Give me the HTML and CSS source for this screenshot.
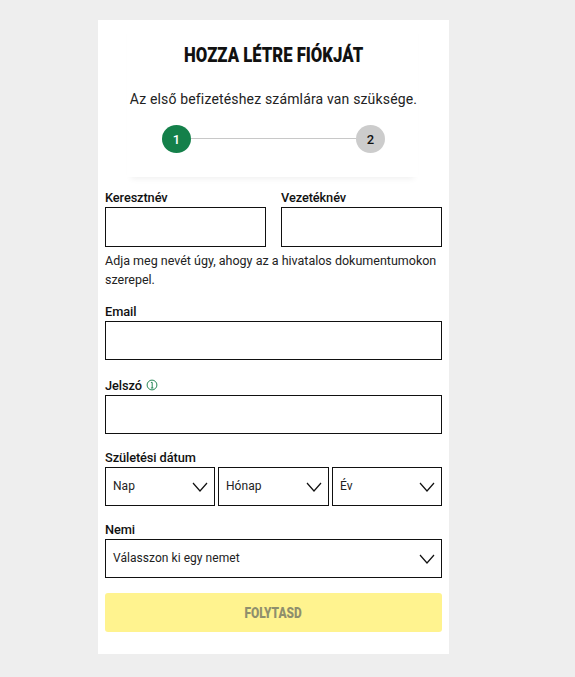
FILE: index.html
```html
<!DOCTYPE html>
<html lang="hu">
<head>
<meta charset="utf-8">
<title>Hozza létre fiókját</title>
<link rel="stylesheet" href="styles.css">
</head>
<body>
<main class="card">
  <header class="head">
    <h1 class="title"><span class="squeeze">HOZZA LÉTRE FIÓKJÁT</span></h1>
    <p class="sub">Az első befizetéshez számlára van szüksége.</p>
    <div class="steps">
      <span class="step step-on">1</span>
      <span class="step-line"></span>
      <span class="step step-off">2</span>
    </div>
  </header>
  <form class="form">
    <div class="names">
      <div class="field"><label class="label">Keresztnév</label><div class="input"></div></div>
      <div class="field"><label class="label">Vezetéknév</label><div class="input"></div></div>
    </div>
    <p class="hint">Adja meg nevét úgy, ahogy az a hivatalos dokumentumokon szerepel.</p>
    <div class="field f-email"><label class="label">Email</label><div class="input short"></div></div>
    <div class="field f-next"><label class="label">Jelszó
      <svg class="info" viewBox="0 0 12 12" width="12" height="12"><circle cx="6" cy="6" r="4.9" fill="none" stroke="#0f7a45" stroke-width=".9"/><path d="M4.9 3.4H6.2V9M4.9 9H7.4" fill="none" stroke="#0f7a45" stroke-width=".9"/></svg>
    </label><div class="input short"></div></div>
    <div class="field f-next2"><label class="label">Születési dátum</label>
      <div class="dates">
        <div class="select short">Nap<svg class="chev" viewBox="0 0 16 10" width="16" height="10"><path d="M1 1l7 8 7-8" fill="none" stroke="#111" stroke-width="1.2"/></svg></div>
        <div class="select short">Hónap<svg class="chev" viewBox="0 0 16 10" width="16" height="10"><path d="M1 1l7 8 7-8" fill="none" stroke="#111" stroke-width="1.2"/></svg></div>
        <div class="select short">Év<svg class="chev" viewBox="0 0 16 10" width="16" height="10"><path d="M1 1l7 8 7-8" fill="none" stroke="#111" stroke-width="1.2"/></svg></div>
      </div>
    </div>
    <div class="field f-next2"><label class="label">Nemi</label>
      <div class="select short">Válasszon ki egy nemet<svg class="chev" viewBox="0 0 16 10" width="16" height="10"><path d="M1 1l7 8 7-8" fill="none" stroke="#111" stroke-width="1.2"/></svg></div>
    </div>
    <button type="button" class="submit"><span class="squeeze">FOLYTASD</span></button>
  </form>
</main>
</body>
</html>
```
FILE: styles.css
```css
* { box-sizing: border-box; }
html, body { margin: 0; height: 677px; overflow: hidden; }
body {
  background: #eeeeee;
  font-family: Roboto, "Liberation Sans", sans-serif;
  color: #111;
  padding-top: 20px;
}
.card {
  width: 351px;
  height: 634px;
  margin-left: 98px;
  background: #fff;
  padding: 0 7px;
}
.head { height: 157px; margin: 0 24px 0 22px; box-shadow: 0 6px 6px -4px rgba(0,0,0,.06); padding-top: 24px; }
.squeeze { display: inline-block; transform: scaleX(.795); }
.title {
  margin: 0 -2px 0 0;
  font-size: 21px;
  line-height: 22px;
  font-weight: 900;
  text-align: center;
  color: #111;
}
.sub {
  margin: 23px -12px 0 -10px;
  font-size: 14px;
  line-height: 20px;
  text-align: center;
  letter-spacing: .16px;
  color: #222;
}
.steps { display: flex; align-items: center; margin: 16px 0 0 35px; width: 223px; }
.step {
  width: 29px; height: 28px; border-radius: 50%;
  display: flex; align-items: center; justify-content: center;
  font-size: 13px; font-weight: 500;
}
.step-on { background: #14804a; color: #fff; }
.step-off { background: #cccccc; color: #111; }
.step-line { flex: 1; height: 1px; background: #c8c8c8; margin-bottom: 2px; }
.form { padding-top: 13px; }
.names { display: grid; grid-template-columns: 161px 161px; column-gap: 15px; }
.label {
  display: block;
  font-size: 12.8px;
  line-height: 15px;
  font-weight: 500;
  letter-spacing: -.1px;
  color: #111;
  margin-bottom: 2px;
}
.input { height: 40px; border: 1px solid #111; background: #fff; }
.short { height: 39px; }
.hint { margin: 4px 0 0; font-size: 12.5px; line-height: 19px; color: #222; }
.f-email { margin-top: 15px; }
.f-next { margin-top: 18px; }
.f-next2 { margin-top: 16px; }
.info { vertical-align: -1px; margin-left: 1px; }
.dates { display: grid; grid-template-columns: 110px 111px 110px; column-gap: 3px; }
.select {
  display: flex; align-items: center; justify-content: space-between;
  border: 1px solid #111;
  padding: 0 6px 2px 7px;
  font-size: 12px;
  letter-spacing: .05px;
  color: #222;
}
.chev { margin-top: 2px; }
.submit {
  display: block;
  width: 337px; height: 39px;
  margin-top: 15px;
  border: 0; border-radius: 3px;
  background: #fff38f;
  color: #8f8f6d;
  font-family: Roboto, sans-serif;
  font-size: 15px;
  font-weight: 900;
}
```
